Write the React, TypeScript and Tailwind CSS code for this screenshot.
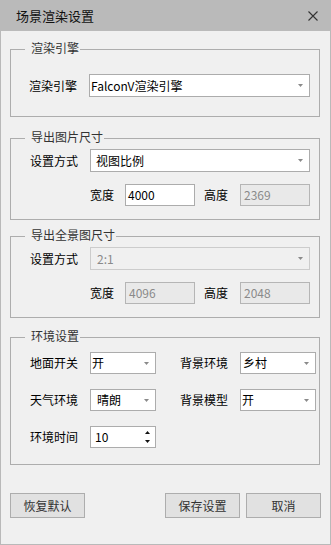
import React from "react";

function Arrow({ dark }: { dark?: boolean }) {
  return (
    <svg width="5" height="3" viewBox="0 0 5 3" className="shrink-0">
      <polygon points="0,0 5,0 2.5,3" fill={dark ? "#5a5a5a" : "#8a8a8a"} />
    </svg>
  );
}

function Group({
  title,
  className,
  children,
}: {
  title: string;
  className: string;
  children: React.ReactNode;
}) {
  return (
    <div className={`relative w-[310px] border border-[#adadad] ${className}`}>
      <span className="absolute left-[14px] -top-[9px] bg-[#f0f0f0] pl-[6px] pr-[1px] leading-[14px] text-[#333]">
        {title}
      </span>
      {children}
    </div>
  );
}

function Select({
  value,
  className,
  disabled,
}: {
  value: string;
  className: string;
  disabled?: boolean;
}) {
  return (
    <div
      className={`flex items-center justify-between border pr-[6px] ${
        disabled
          ? "border-[#cccccc] bg-[#f0f0f0] text-[#8a8a8a]"
          : "border-[#acacac] bg-white text-black"
      } ${className}`}
    >
      <span className="leading-[14px]">{value}</span>
      <Arrow />
    </div>
  );
}

function Field({ value, disabled }: { value: string; disabled?: boolean }) {
  return (
    <div
      className={`w-[70px] h-[22px] flex items-center border ${
        disabled
          ? "border-[#b5b5b5] bg-[#e9e9e9] text-[#8a8a8a] pl-[3px]"
          : "border-[#acacac] bg-white text-black pl-[2px]"
      }`}
    >
      {value}
    </div>
  );
}

function SizeRow({
  w,
  h,
  wDisabled,
}: {
  w: string;
  h: string;
  wDisabled?: boolean;
}) {
  return (
    <div className="flex items-center pl-[79px] mt-[12px]">
      <span className="w-[35px]">宽度</span>
      <Field value={w} disabled={wDisabled} />
      <span className="ml-[9px] w-[36px]">高度</span>
      <Field value={h} disabled />
    </div>
  );
}

function Button({ label, className }: { label: string; className: string }) {
  return (
    <button
      type="button"
      className={`w-[75px] h-[25px] border border-[#adadad] bg-[#e1e1e1] text-[#333] text-[12px] leading-[14px] ${className}`}
    >
      {label}
    </button>
  );
}

export default function App() {
  return (
    <div className="w-[331px] h-[545px] flex flex-col bg-[#f0f0f0] font-['Noto_Sans_CJK_SC','Noto_Sans',sans-serif] text-[12px] leading-[14px] text-black">
      {/* title bar */}
      <div className="h-[31px] shrink-0 bg-[#bababa] flex items-center justify-between pl-[16px] pr-[13px]">
        <span className="text-[13px] leading-[16px] text-[#111]">场景渲染设置</span>
        <svg width="10" height="10" viewBox="0 0 10 10">
          <path d="M0.5 0.5 9.5 9.5 M9.5 0.5 0.5 9.5" stroke="#333" strokeWidth="1.1" />
        </svg>
      </div>

      <div className="flex-1 border-x border-b border-[#b9b9b9] px-[9px]">
        <Group title="渲染引擎" className="mt-[18px] h-[68px] pt-[24px] pl-[18px]">
          <div className="flex items-center">
            <span className="w-[60px]">渲染引擎</span>
            <Select value="FalconV渲染引擎" className="w-[221px] h-[23px] pl-[1px]" />
          </div>
        </Group>

        <Group title="导出图片尺寸" className="mt-[21px] h-[82px] pt-[10px] pl-[19px]">
          <div className="flex items-center">
            <span className="w-[60px]">设置方式</span>
            <Select value="视图比例" className="w-[220px] h-[23px] pl-[5px]" />
          </div>
          <div className="-ml-[19px]">
            <SizeRow w="4000" h="2369" />
          </div>
        </Group>

        <Group title="导出全景图尺寸" className="mt-[16px] h-[82px] pt-[10px] pl-[19px]">
          <div className="flex items-center">
            <span className="w-[60px]">设置方式</span>
            <Select value="2:1" disabled className="w-[220px] h-[23px] pl-[6px]" />
          </div>
          <div className="-ml-[19px]">
            <SizeRow w="4096" h="2048" wDisabled />
          </div>
        </Group>

        <Group title="环境设置" className="mt-[19px] h-[128px] pt-[14px] pl-[19px]">
          <div className="flex items-center">
            <span className="w-[60px]">地面开关</span>
            <Select value="开" className="w-[66px] h-[22px] pl-[1px]" />
            <span className="ml-[24px] w-[60px]">背景环境</span>
            <Select value="乡村" className="w-[76px] h-[22px] pl-[2px]" />
          </div>
          <div className="flex items-center mt-[15px]">
            <span className="w-[60px]">天气环境</span>
            <Select value="晴朗" className="w-[66px] h-[22px] pl-[6px]" />
            <span className="ml-[24px] w-[60px]">背景模型</span>
            <Select value="开" className="w-[76px] h-[22px] pl-[1px]" />
          </div>
          <div className="flex items-center mt-[15px]">
            <span className="w-[60px]">环境时间</span>
            <div className="w-[66px] h-[22px] flex items-center justify-between border border-[#acacac] bg-white pl-[4px] pr-[5px]">
              <span>10</span>
              <div className="flex flex-col gap-[6px]">
                <svg width="5" height="3" viewBox="0 0 5 3">
                  <polygon points="2.5,0 5,3 0,3" fill="#111" />
                </svg>
                <svg width="5" height="3" viewBox="0 0 5 3">
                  <polygon points="0,0 5,0 2.5,3" fill="#111" />
                </svg>
              </div>
            </div>
          </div>
        </Group>

        <div className="mt-[28px] w-[311px] flex">
          <Button label="恢复默认" className="" />
          <Button label="保存设置" className="ml-auto" />
          <Button label="取消" className="ml-[6px]" />
        </div>
      </div>
    </div>
  );
}
